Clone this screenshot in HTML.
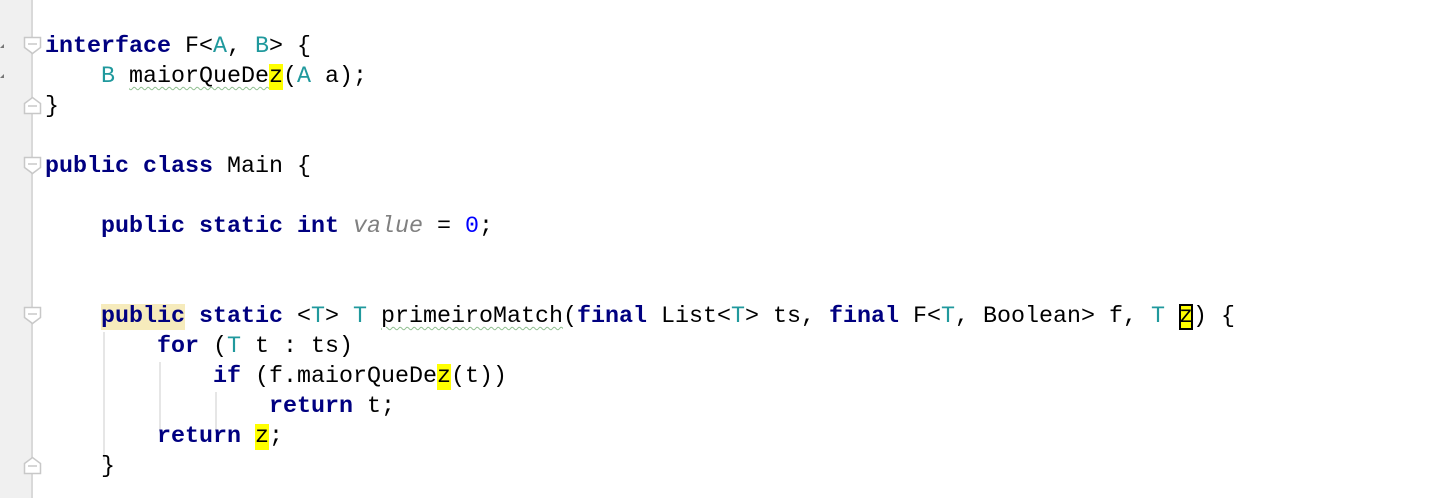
<!DOCTYPE html>
<html><head><style>
html,body{margin:0;padding:0;width:1440px;height:498px;background:#fff;overflow:hidden}
.g{position:absolute;left:0;top:0;width:32px;height:498px;background:#f0f0f0}
.gl{position:absolute;left:31px;top:0;width:2px;height:498px;background:#d9d9d9}
.code{position:absolute;left:45px;top:32px;margin:0;font-family:"Liberation Mono",monospace;font-size:23.33px;line-height:30px;color:#000;white-space:pre}
.k{color:#000080;font-weight:bold}
.t{color:#20999d}
.n{color:#0000ff}
.i{color:#808080;font-style:italic}
.y{background:#ffff00}
.yb{background:#ffff00;outline:2px solid #000;outline-offset:-2px}
.p{background:#f6ebbc}
.w{text-decoration:underline wavy #8fbf8f;text-decoration-thickness:1px;text-underline-offset:4px}
.vl{position:absolute;width:2px;background:#e6e6e6}
</style></head><body>
<div class="g"></div><div class="gl"></div>
<svg style="position:absolute;left:0;top:0" width="60" height="498">
<g fill="#fff" stroke="#c8c8c8" stroke-width="1.5">
<path d="M24.5 37.5h16v10l-8 6l-8-6z"/><line x1="28" y1="44" x2="37" y2="44"/>
<path d="M24.5 157.5h16v10l-8 6l-8-6z"/><line x1="28" y1="164" x2="37" y2="164"/>
<path d="M24.5 307.5h16v10l-8 6l-8-6z"/><line x1="28" y1="314" x2="37" y2="314"/>
<path d="M24.5 113.5h16v-10l-8-6l-8 6z"/><line x1="28" y1="106" x2="37" y2="106"/>
<path d="M24.5 473.5h16v-10l-8-6l-8 6z"/><line x1="28" y1="466" x2="37" y2="466"/>
</g>
<path d="M0 48l4 -4v4z" fill="#777"/><path d="M0 78l4 -4v4z" fill="#777"/>
</svg>
<div class="vl" style="left:103px;top:332px;height:128px"></div>
<div class="vl" style="left:159px;top:362px;height:68px"></div>
<div class="vl" style="left:215px;top:392px;height:38px"></div>
<pre class="code"><span class="k">interface</span> F&lt;<span class="t">A</span>, <span class="t">B</span>&gt; {
    <span class="t">B</span> <span class="w">maiorQueDe</span><span class="y">z</span>(<span class="t">A</span> a);
}

<span class="k">public class</span> Main {

    <span class="k">public static int</span> <span class="i">value</span> = <span class="n">0</span>;


    <span class="k p">public</span> <span class="k">static</span> &lt;<span class="t">T</span>&gt; <span class="t">T</span> <span class="w">primeiroMatch</span>(<span class="k">final</span> List&lt;<span class="t">T</span>&gt; ts, <span class="k">final</span> F&lt;<span class="t">T</span>, Boolean&gt; f, <span class="t">T</span> <span class="yb">z</span>) {
        <span class="k">for</span> (<span class="t">T</span> t : ts)
            <span class="k">if</span> (f.maiorQueDe<span class="y">z</span>(t))
                <span class="k">return</span> t;
        <span class="k">return</span> <span class="y">z</span>;
    }
</pre>
</body></html>
